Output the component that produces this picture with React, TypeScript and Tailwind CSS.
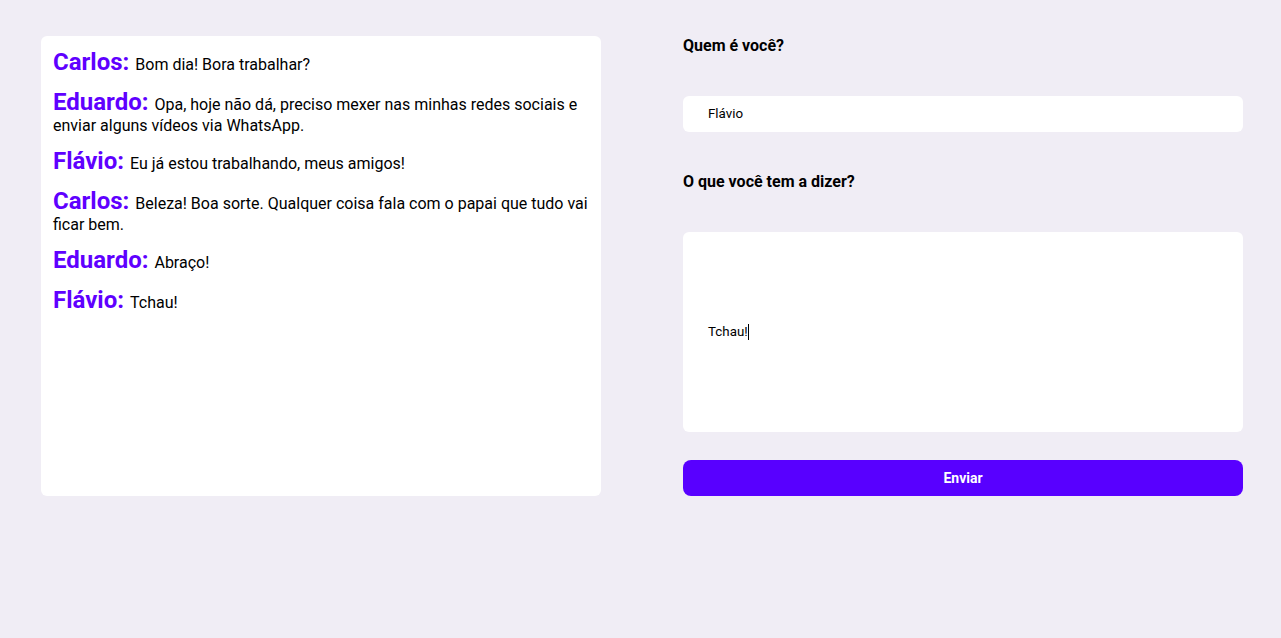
import React from 'react'

const messages = [
  { name: 'Carlos', text: 'Bom dia! Bora trabalhar?' },
  { name: 'Eduardo', text: 'Opa, hoje não dá, preciso mexer nas minhas redes sociais e enviar alguns vídeos via WhatsApp.' },
  { name: 'Flávio', text: 'Eu já estou trabalhando, meus amigos!' },
  { name: 'Carlos', text: 'Beleza! Boa sorte. Qualquer coisa fala com o papai que tudo vai ficar bem.' },
  { name: 'Eduardo', text: 'Abraço!' },
  { name: 'Flávio', text: 'Tchau!' },
]

function App() {
  return (
    <div className="min-h-[638px] bg-[#f0edf5] font-[Roboto,sans-serif] text-black">
      <div className="flex gap-[82px] pl-[41px] pt-[36px]">
        {/* chat */}
        <div className="w-[560px] h-[460px] bg-white rounded-md p-3">
          {messages.map((m, i) => (
            <p key={i} className="mb-3 text-base leading-[normal]">
              <span className="text-2xl leading-[normal] font-bold text-[#5f00ff]">{m.name}: </span>
              {m.text}
            </p>
          ))}
        </div>

        {/* form */}
        <div className="w-[560px] flex flex-col">
          <label className="font-bold text-base leading-[19px]">Quem é você?</label>
          <input
            className="mt-[41px] h-9 bg-white rounded-md px-[25px] text-[13.33px] leading-[normal] pb-px outline-none"
            defaultValue="Flávio"
          />
          <label className="mt-[40px] font-bold text-base leading-[19px]">O que você tem a dizer?</label>
          <div className="mt-[41px] h-[200px] bg-white rounded-md px-[25px] flex items-center text-[13.33px]">
            Tchau!<span className="inline-block w-px h-[16px] bg-black" />
          </div>
          <button className="mt-[28px] h-9 bg-[#5800ff] rounded-lg text-white font-bold text-sm">
            Enviar
          </button>
        </div>
      </div>
    </div>
  )
}

export default App
